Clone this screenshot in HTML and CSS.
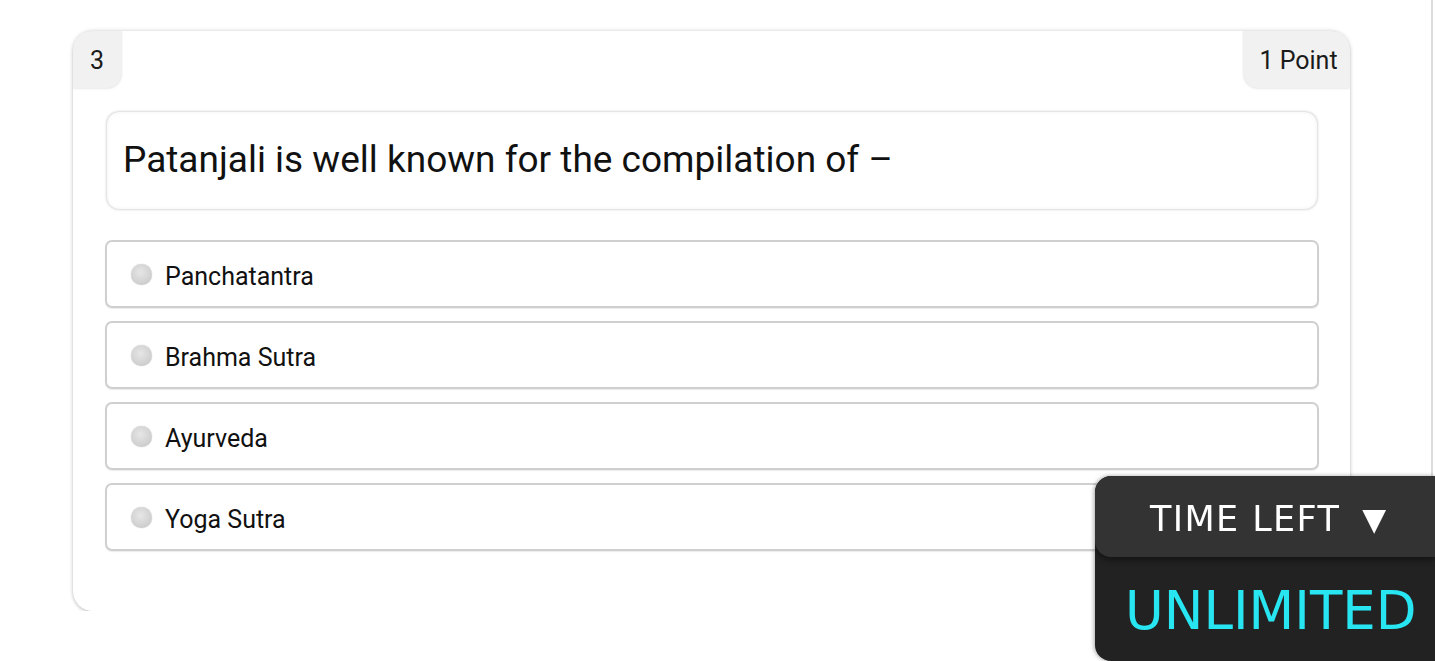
FILE: index.html
```html
<!DOCTYPE html>
<html>
<head>
<meta charset="utf-8">
<link rel="stylesheet" href="styles.css">
</head>
<body>
<div class="page">
  <div class="card">
    <div class="card-head">
      <div class="tab tab-num">3</div>
      <div class="tab tab-pts">1 Point</div>
    </div>
    <div class="question">Patanjali is well known for the compilation of –</div>
    <div class="options">
      <label class="option"><span class="radio"></span><span>Panchatantra</span></label>
      <label class="option"><span class="radio"></span><span>Brahma Sutra</span></label>
      <label class="option"><span class="radio"></span><span>Ayurveda</span></label>
      <label class="option"><span class="radio"></span><span>Yoga Sutra</span></label>
    </div>
  </div>
</div>
<div class="edge"></div>
<div class="timer">
  <div class="timer-head">TIME LEFT <span class="arrow">▼</span></div>
  <div class="timer-body">UNLIMITED</div>
</div>
</body>
</html>
```
FILE: styles.css
```css
* { box-sizing: border-box; }
html, body { margin: 0; padding: 0; background: #fff; }
body { font-family: Roboto, "Liberation Sans", sans-serif; color: #111; overflow: hidden; }

.page { padding: 31px 0 0 73px; }

.card {
  width: 1277px;
  height: 580px;
  background: #fff;
  border-radius: 20px;
  box-shadow: 0 0 4px rgba(0,0,0,0.2), 0 2px 3px rgba(0,0,0,0.10);
  overflow: hidden;
}

.card-head { display: flex; justify-content: space-between; height: 57px; }
.tab {
  background: #f1f1f1;
  height: 57px;
  display: flex;
  align-items: center;
  justify-content: center;
  font-size: 25px;
  color: #1a1a1a;
  padding-top: 2px;
  box-shadow: 0 0 3px rgba(0,0,0,0.18);
}
.tab-num { width: 48px; border-bottom-right-radius: 14px; }
.tab-pts { width: 106px; border-bottom-left-radius: 14px; padding-left: 3px; }

.question {
  margin: 24px 33px 0 34px;
  height: 97px;
  border-radius: 12px;
  box-shadow: 0 0 3px rgba(0,0,0,0.3), inset 0 0 4px rgba(0,0,0,0.06);
  display: flex;
  align-items: center;
  padding-left: 16px;
  padding-bottom: 2px;
  font-size: 37px;
  color: #111;
}

.options {
  margin: 31px 31px 0 32px;
  display: flex;
  flex-direction: column;
  gap: 13px;
}
.option {
  height: 68px;
  border: 2px solid #cfcfcf;
  border-radius: 7px;
  display: flex;
  align-items: center;
  padding-left: 24px;
  padding-top: 4px;
  font-size: 25px;
  color: #111;
  gap: 13px;
  box-shadow: 0 1px 1px rgba(0,0,0,0.08);
}
.radio {
  width: 21px;
  height: 21px;
  margin-top: -4px;
  border-radius: 50%;
  background: radial-gradient(circle at 45% 40%, #e6e6e6 0%, #d0d0d0 65%, #b8b8b8 100%);
  box-shadow: 0 0 1px rgba(0,0,0,0.35);
}

.edge {
  position: fixed;
  top: 0;
  bottom: 0;
  left: 1431px;
  width: 2px;
  background: #dcdcdc;
}

.timer {
  position: fixed;
  left: 1095px;
  right: 0;
  top: 476px;
  bottom: 0;
  background: #222;
  border-top-left-radius: 16px;
  border-bottom-left-radius: 16px;
  box-shadow: -1px 0 4px rgba(0,0,0,0.35);
  font-family: "DejaVu Sans", "Noto Sans", sans-serif;
  overflow: hidden;
}
.timer-head {
  height: 81px;
  background: #333;
  border-top-left-radius: 16px;
  border-bottom-left-radius: 16px;
  box-shadow: 0 3px 6px rgba(0,0,0,0.45);
  color: #fff;
  font-size: 35px;
  letter-spacing: 1.4px;
  display: flex;
  align-items: center;
  padding-left: 55px;
  padding-top: 5px;
}
.arrow { font-size: 31px; margin-left: 22px; }
.timer-body {
  height: 104px;
  color: #27e6f2;
  font-size: 53px;
  display: flex;
  align-items: center;
  padding-left: 30px;
  padding-top: 2px;
}
```
